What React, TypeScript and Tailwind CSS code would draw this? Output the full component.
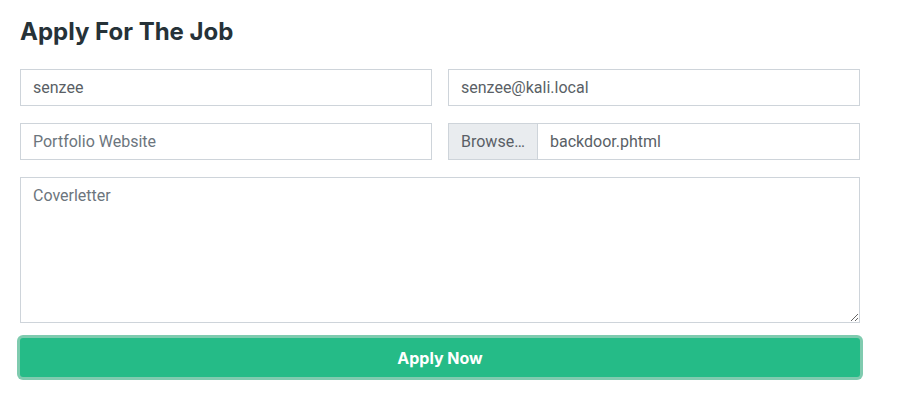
const App = () => {
  return (
    <div className="w-[900px] h-[413px] bg-white px-5 pt-[17px] font-['Roboto',sans-serif]">
      <h2 className="text-[24px] leading-[30px] font-bold text-[#263238] font-['Inter',sans-serif] mb-[22px]">
        Apply For The Job
      </h2>
      <form className="w-[840px] flex flex-col">
        <div className="grid grid-cols-2 gap-x-4 mb-[17px]">
          <input
            type="text"
            defaultValue="senzee"
            className="h-[37px] px-3 border border-[#ced4da] text-[16px] text-[#5a5f66] outline-none"
          />
          <input
            type="email"
            defaultValue="senzee@kali.local"
            className="h-[37px] px-3 border border-[#ced4da] text-[16px] text-[#5a5f66] outline-none"
          />
        </div>
        <div className="grid grid-cols-2 gap-x-4 mb-[17px]">
          <input
            type="url"
            placeholder="Portfolio Website"
            className="h-[37px] px-3 border border-[#ced4da] text-[16px] text-[#5a5f66] placeholder:text-[#6c757d] outline-none"
          />
          <div className="h-[37px] flex border border-[#ced4da]">
            <span className="w-[89px] flex items-center px-3 bg-[#e9ecef] border-r border-[#ced4da] text-[16px] text-[#5a5f66]">
              Browse…
            </span>
            <span className="flex items-center px-3 text-[16px] text-[#5a5f66]">
              backdoor.phtml
            </span>
          </div>
        </div>
        <textarea
          placeholder="Coverletter"
          className="h-[146px] px-3 py-[6px] border border-[#ced4da] text-[16px] text-[#5a5f66] placeholder:text-[#6c757d] outline-none mb-[15px]"
        />
        <button
          type="button"
          className="h-[39px] bg-[#25bb87] text-white text-[16px] font-bold font-['Inter',sans-serif] rounded-[3px] ring-[3px] ring-[#7fcbaf]"
        >
          Apply Now
        </button>
      </form>
    </div>
  );
};

export default App;
